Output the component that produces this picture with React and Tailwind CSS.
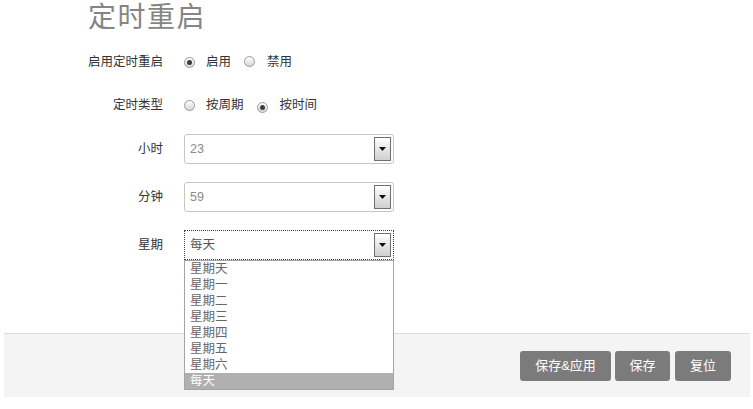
import React from "react";

const font = { fontFamily: '"Liberation Sans", "Noto Sans CJK SC", sans-serif' };

function Radio({ checked }) {
  return (
    <span className="inline-flex w-[11px] h-[11px] rounded-full border border-[#9a9a9a] bg-gradient-to-b from-[#ffffff] to-[#d6d6d6] items-center justify-center">
      {checked && <span className="w-[5px] h-[5px] rounded-full bg-[#3a3a3a]" />}
    </span>
  );
}

function Arrow() {
  return (
    <span className="absolute right-[2px] top-[2px] bottom-[2px] w-[17px] border border-[#6f6f6f] bg-gradient-to-b from-[#ffffff] to-[#cfcfcf] flex items-center justify-center">
      <svg width="7" height="4" viewBox="0 0 7 4">
        <path d="M0 0h7L3.5 4z" fill="#111" />
      </svg>
    </span>
  );
}

function Row({ label, children, className }) {
  return (
    <div className={`flex items-center ${className}`}>
      <div className="w-[164px] pr-[1px] text-right text-[12.5px] text-[#333]">{label}</div>
      <div className="ml-[20px] flex items-center">{children}</div>
    </div>
  );
}

function Select({ value, focused, dim }) {
  return (
    <div
      className={`relative w-[210px] h-[30px] flex items-center pl-[5px] text-[12.5px] ${
        focused ? "border border-dotted border-[#444]" : "border border-[#c6c6c6] rounded-[3px]"
      } ${dim ? "text-[#8a8a8a]" : "text-[#555]"}`}
    >
      {value}
      <Arrow />
    </div>
  );
}

const days = ["星期天", "星期一", "星期二", "星期三", "星期四", "星期五", "星期六", "每天"];

export default function App() {
  return (
    <div className="relative w-[753px] h-[409px] bg-white overflow-hidden" style={font}>
      <div className="h-[36px] pl-[88px] text-[28px] leading-[36px] text-[#858585] tracking-[1.5px]">定时重启</div>

      <Row label="启用定时重启" className="mt-[16px] h-[20px]">
        <Radio checked />
        <span className="ml-[11px] text-[12.5px] text-[#333]">启用</span>
        <span className="ml-[13px]"><Radio /></span>
        <span className="ml-[12px] text-[12.5px] text-[#333]">禁用</span>
      </Row>

      <Row label="定时类型" className="mt-[23px] h-[20px]">
        <Radio />
        <span className="ml-[11px] text-[12.5px] text-[#333]">按周期</span>
        <span className="ml-[13px]"><Radio checked /></span>
        <span className="ml-[12px] text-[12.5px] text-[#333]">按时间</span>
      </Row>

      <Row label="小时" className="mt-[19px]">
        <Select value="23" dim />
      </Row>
      <Row label="分钟" className="mt-[18px]">
        <Select value="59" dim />
      </Row>
      <Row label="星期" className="mt-[18px]">
        <Select value="每天" focused />
      </Row>

      <div className="mt-[73px] mx-[4px] mr-[3px] h-[64px] border-t border-[#dcdcdc] bg-[#f4f4f4] flex justify-end items-start pt-[17px] pr-[19px] gap-[4px]">
        <button className="w-[91px] h-[30px] rounded-[3px] bg-[#7b7b7b] text-white text-[13px]">保存&amp;应用</button>
        <button className="w-[55px] h-[30px] rounded-[3px] bg-[#7b7b7b] text-white text-[13px]">保存</button>
        <button className="ml-[1px] w-[56px] h-[30px] rounded-[3px] bg-[#7b7b7b] text-white text-[13px]">复位</button>
      </div>

      <div className="absolute left-[184px] top-[260px] w-[210px] border border-[#a5a5a5] bg-white">
        {days.map((d, i) => (
          <div
            key={d}
            className={`h-[16px] leading-[16px] pl-[5px] text-[12.5px] ${
              i === days.length - 1 ? "bg-[#b0b0b0] text-white" : "text-[#666]"
            }`}
          >
            {d}
          </div>
        ))}
      </div>
    </div>
  );
}
